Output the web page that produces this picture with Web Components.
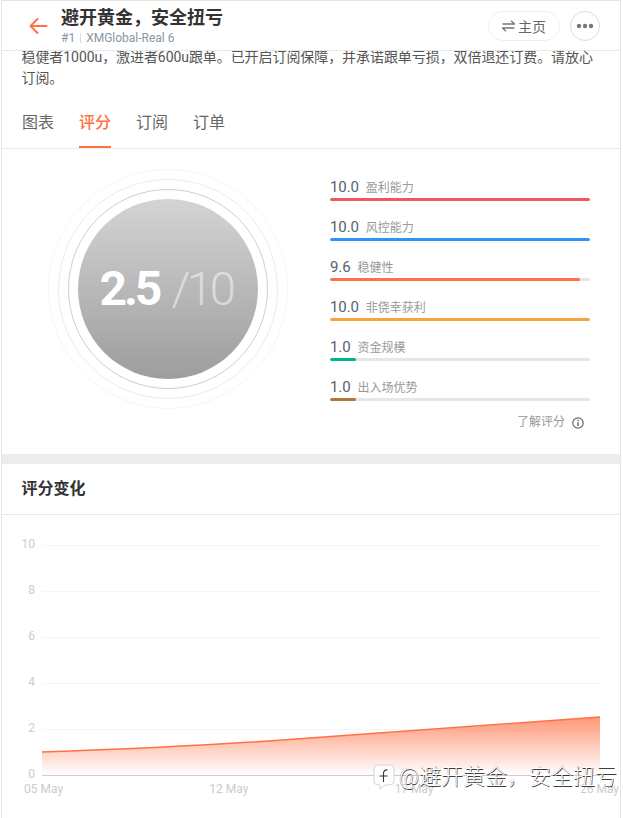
<!DOCTYPE html>
<html lang="zh"><head><meta charset="utf-8"><title>评分</title>
<style>
html,body{margin:0;padding:0;background:#fff;font-family:Roboto,"Noto Sans CJK SC",sans-serif}
</style></head><body>
<app-frame>
  <app-header title="避开黄金，安全扭亏" rank="#1" account="XMGlobal-Real 6"></app-header>
  <intro-text>稳健者1000u，激进者600u跟单。已开启订阅保障，并承诺跟单亏损，双倍退还订费。请放心订阅。</intro-text>
  <tab-bar></tab-bar>
  <rate-panel>
    <score-ring slot="ring"></score-ring>
    <score-bar value="10.0" label="盈利能力" pct="100" color="#f25757"></score-bar>
    <score-bar value="10.0" label="风控能力" pct="100" color="#3293f6"></score-bar>
    <score-bar value="9.6" label="稳健性" pct="96" color="#ff7043"></score-bar>
    <score-bar value="10.0" label="非侥幸获利" pct="100" color="#f6a344"></score-bar>
    <score-bar value="1.0" label="资金规模" pct="10" color="#00b294"></score-bar>
    <score-bar value="1.0" label="出入场优势" pct="10" color="#b3763e"></score-bar>
  </rate-panel>
  <trend-chart></trend-chart>
</app-frame>
<script>
const font='Roboto,"Noto Sans CJK SC",sans-serif';
function def(name,html){
  customElements.define(name,class extends HTMLElement{
    connectedCallback(){
      if(this.shadowRoot)return;
      const r=this.attachShadow({mode:'open'});
      r.innerHTML=typeof html==='function'?html(this):html;
    }
  });
}
def('app-frame',`<style>
:host{display:block;box-sizing:border-box;position:relative;margin-left:1px;width:620px;height:818px;overflow:hidden;
border:solid #e4e4e4;border-width:1px 1px 0 1px;background:#fff;font-family:${font}}
</style><slot></slot>`);

def('app-header',h=>`<style>
:host{display:flex;align-items:center;position:relative;z-index:2;box-sizing:border-box;height:50px;background:#fff;border-bottom:1px solid #e8e8e8;padding:0 20px 0 26px}
.back{width:20px;height:20px;flex:none;margin-right:13px}
.txt{flex:1;min-width:0;margin-top:1px}
h1{margin:0;font-size:18px;line-height:24px;font-weight:700;color:#333}
.sub{display:flex;align-items:center;font-size:12px;line-height:16px;color:#8b95a3}
.sub i{width:1px;height:10px;background:#ddd;margin:0 5px}
.pill{box-sizing:border-box;display:flex;align-items:center;justify-content:center;gap:3px;width:72px;height:30px;border:1px solid #eee;border-radius:15px;font-size:14px;color:#666;margin-right:10px}
.more{box-sizing:border-box;display:flex;align-items:center;justify-content:center;width:30px;height:30px;border:1px solid #ddd;border-radius:50%}
</style>
<svg class="back" viewBox="0 0 20 20" fill="none" stroke="#ff7043" stroke-width="2" stroke-linecap="round" stroke-linejoin="round"><path d="M2.5 10H18.5M9.5 3L2.5 10L9.5 17"/></svg>
<div class="txt"><h1>${h.getAttribute('title')}</h1><div class="sub">${h.getAttribute('rank')}<i></i>${h.getAttribute('account')}</div></div>
<div class="pill"><svg width="13" height="12" viewBox="0 0 13 12" fill="none" stroke="#777" stroke-width="1.3"><path d="M0.5 4H12.5L9 .8M12.5 8H.5L4 11.2"/></svg>主页</div>
<div class="more"><svg width="18" height="6" viewBox="0 0 18 6" fill="#777"><circle cx="3" cy="3" r="2.2"/><circle cx="9" cy="3" r="2.2"/><circle cx="15" cy="3" r="2.2"/></svg></div>`);

def('intro-text',`<style>
:host{display:block;margin-top:-4px;padding:0 20px 0 19.5px;font-size:14px;line-height:21px;letter-spacing:-.07px;color:#555}
</style><slot></slot>`);

def('tab-bar',`<style>
:host{display:flex;gap:25px;box-sizing:border-box;height:60px;padding:0 20px;border-bottom:1px solid #e8e8e8;font-size:16px;color:#666}
span{box-sizing:border-box;display:flex;align-items:center;height:59px;padding-top:16px;padding-bottom:12px}
.on{color:#ff7043;font-weight:500;border-bottom:2px solid #ff7043;padding-bottom:10px}
</style><span>图表</span><span class="on">评分</span><span>订阅</span><span>订单</span>`);

def('rate-panel',`<style>
:host{display:flex;align-items:flex-start;box-sizing:border-box;padding:20px 0 0 46px;border-bottom:10px solid #ebecee;height:315px}
.ring{flex:none;width:240px}
.bars{margin-left:42px;margin-top:7px;width:260px;display:flex;flex-direction:column;gap:15px}
.more{display:flex;justify-content:flex-end;align-items:center;gap:7px;font-size:12px;line-height:17px;color:#999;margin:-2px 0 0;padding-right:6px}
</style><div class="ring"><slot name="ring"></slot></div>
<div class="bars"><slot></slot><div class="more">了解评分<svg width="12" height="12" viewBox="0 0 12 12" fill="none" stroke="#666"><circle cx="6" cy="6" r="5.2" stroke-width="1.2"/><path d="M6 5.2V9" stroke-width="1.4"/><path d="M6 2.8V4.2" stroke-width="1.4"/></svg></div></div>`);

def('score-ring',`<style>
:host{display:block;width:240px;height:240px}
.r{box-sizing:border-box;display:flex;align-items:center;justify-content:center;border-radius:50%;border:1px solid}
.r3{width:240px;height:240px;border-color:#f6f6f6}
.r2{width:220px;height:220px;border-color:#ececec}
.r1{width:200px;height:200px;border-color:#cfcfcf}
.c{display:flex;align-items:baseline;justify-content:center;width:180px;height:180px;border-radius:50%;background:linear-gradient(#d4d4d4,#9d9d9d);color:#fff;line-height:180px}
b{font-size:48px;font-weight:700;letter-spacing:-3px}
em{font-style:normal;font-size:47px;font-weight:300;letter-spacing:-3.2px;color:rgba(255,255,255,.5);margin-left:12px;margin-right:4px}
</style><div class="r r3"><div class="r r2"><div class="r r1"><div class="c"><b>2.5</b><em>/10</em></div></div></div></div>`);

def('score-bar',h=>`<style>
:host{display:block;height:25px}
.t{display:flex;align-items:baseline;height:22px;line-height:22px}
b{font-weight:400;font-size:15px;letter-spacing:-.1px;color:#566272;margin-right:7px}
span{font-size:12px;color:#999}
.track{height:3px;border-radius:2px;background:#e6e6e6;overflow:hidden}
.fill{height:100%;border-radius:2px;background:${h.getAttribute('color')};width:${h.getAttribute('pct')}%}
</style><div class="t"><b>${h.getAttribute('value')}</b><span>${h.getAttribute('label')}</span></div><div class="track"><div class="fill"></div></div>`);

def('trend-chart',`<style>
:host{display:block;position:relative;height:354px}
h2{margin:0;box-sizing:border-box;height:51px;padding:0 20px 4px 19.5px;display:flex;align-items:center;border-bottom:1px solid #e8e8e8;font-size:16px;font-weight:700;color:#333}
.plot{display:flex;align-items:flex-start;margin-top:23px}
.y{box-sizing:border-box;width:33px;height:244px;margin-top:-1px;display:flex;flex-direction:column;justify-content:space-between;text-align:right;font-size:12px;line-height:14px;color:#ccc}
svg.g{display:block;flex:none;margin:7px 0 0 7px}
.x{display:flex;justify-content:space-between;margin:0 1px 0 22px;font-size:12px;line-height:16px;color:#ccc}
.wm{position:absolute;left:371px;top:299px;display:flex;align-items:center;gap:4px;font-size:22px;line-height:28px;font-weight:300;color:#fff;white-space:nowrap;
text-shadow:.6px .6px .6px rgba(0,0,0,.75),-.4px -.4px .5px rgba(0,0,0,.4)}
</style>
<h2>评分变化</h2>
<div class="plot"><div class="y"><span>10</span><span>8</span><span>6</span><span>4</span><span>2</span><span>0</span></div>
<svg class="g" width="558" height="232" viewBox="0 0 558 232" fill="none">
<defs><linearGradient id="a" gradientUnits="userSpaceOnUse" x1="0" y1="172" x2="0" y2="230"><stop offset="0" stop-color="#ff7043" stop-opacity=".72"/><stop offset="1" stop-color="#ff7043" stop-opacity="0"/></linearGradient></defs>
<g stroke="#f5f5f5"><path d="M0 .5H558M0 46.5H558M0 92.5H558M0 138.5H558M0 184.5H558"/></g>
<path d="M0 207C90 204 190 199 268 193C370 186 470 179 558 172V230H0Z" fill="url(#a)"/>
<path d="M0 207C90 204 190 199 268 193C370 186 470 179 558 172" stroke="#ff7043" stroke-width="1.5"/>
<path d="M0 230.5H558" stroke="#ccc"/></svg></div>
<div class="x"><span>05 May</span><span>12 May</span><span>17 May</span><span>26 May</span></div>
<div class="wm"><svg width="22" height="26" viewBox="0 0 22 26"><path d="M5 1H17A4 4 0 0 1 21 5V17A4 4 0 0 1 17 21H12L7 25V21H5A4 4 0 0 1 1 17V5A4 4 0 0 1 5 1Z" fill="#fff" stroke="#aaa" stroke-width=".5"/><path d="M14.5 6C11.5 5.4 10.5 7.5 10.5 9.5V18M6.5 12H14.5" fill="none" stroke="#333" stroke-width="1.1"/></svg><span>@避开黄金，安全扭亏</span></div>`);
</script>
</body></html>
